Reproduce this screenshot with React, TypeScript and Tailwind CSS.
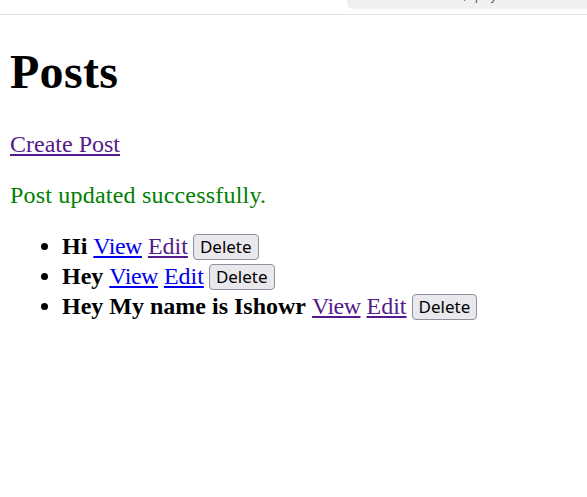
import React from "react";

const serif = { fontFamily: '"Liberation Serif", "Times New Roman", serif' };

function DeleteButton() {
  return (
    <button
      className="inline-block h-[26px] px-[6px] rounded-[4px] border border-[#8f8f9d] bg-[#e9e9ed] text-[17px] leading-[24px] text-black align-[1px] ml-[5px]"
      style={{ fontFamily: '"Noto Sans", "Open Sans", sans-serif' }}
    >
      Delete
    </button>
  );
}

const posts = [
  { title: "Hi", viewVisited: false, editVisited: true },
  { title: "Hey", viewVisited: false, editVisited: false },
  { title: "Hey My name is Ishowr", viewVisited: true, editVisited: true },
];

export default function App() {
  return (
    <div className="w-[587px] h-[497px] bg-white overflow-hidden" style={serif}>
      <div className="h-[15px] border-b border-[#e3e3e3] flex justify-end">
        <div className="w-[240px] h-[9px] bg-[#f0f0f0] rounded-bl-[6px] overflow-hidden relative">
          <span className="absolute left-[116px] top-[-11px] text-[12px] leading-[14px] text-[#555] tracking-[2px]" style={{ fontFamily: '"DejaVu Sans", sans-serif' }}>
            , p y
          </span>
        </div>
      </div>
      <div className="pl-[10px] text-[24px] leading-[30px] text-black">
        <h1 className="mt-[29px] text-[48px] leading-[56px] font-bold tracking-[0.3px]">Posts</h1>
        <p className="mt-[29px]">
          <a href="#" className="text-[#551a8b] underline">Create Post</a>
        </p>
        <p className="mt-[21px] text-[#008000] tracking-[0.2px]">Post updated successfully.</p>
        <ul className="mt-[21px] list-disc pl-[52px]">
          {posts.map((p) => (
            <li key={p.title} className="h-[30px] whitespace-nowrap">
              <strong className="font-bold">{p.title}</strong>{" "}
              <a href="#" className={(p.viewVisited ? "text-[#551a8b]" : "text-[#0000ee]") + " underline tracking-[-0.5px]"}>View</a>{" "}
              <a href="#" className={(p.editVisited ? "text-[#551a8b]" : "text-[#0000ee]") + " underline"}>Edit</a>
              <DeleteButton />
            </li>
          ))}
        </ul>
      </div>
    </div>
  );
}
